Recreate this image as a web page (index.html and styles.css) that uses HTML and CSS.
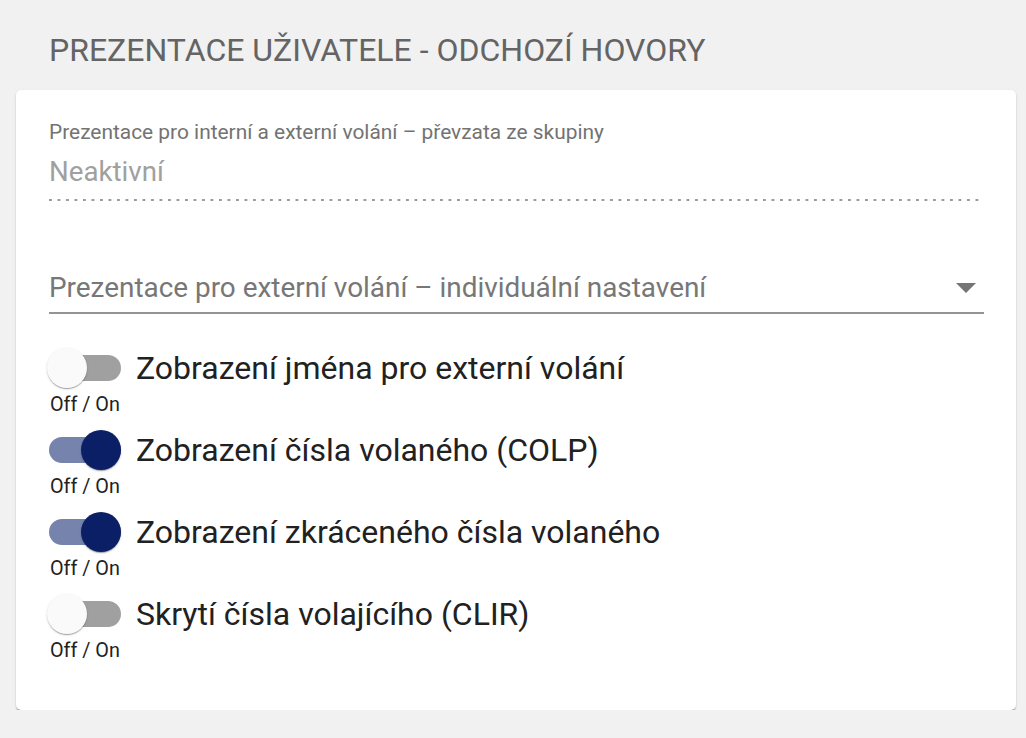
FILE: index.html
```html
<!DOCTYPE html>
<html lang="cs">
<head>
<meta charset="utf-8">
<title>Prezentace uživatele</title>
<link rel="stylesheet" href="styles.css">
</head>
<body>
<div class="page">
  <h1 class="title">PREZENTACE UŽIVATELE - ODCHOZÍ HOVORY</h1>
  <div class="card">
    <div class="field-disabled">
      <div class="field-label">Prezentace pro interní a externí volání – převzata ze skupiny</div>
      <div class="field-value">Neaktivní</div>
      <div class="dotted"></div>
    </div>
    <div class="select">
      <div class="select-row">
        <span class="select-placeholder">Prezentace pro externí volání – individuální nastavení</span>
        <span class="arrow"></span>
      </div>
      <div class="select-line"></div>
    </div>
    <div class="toggles">
      <div class="toggle-item">
        <div class="toggle-row">
          <span class="switch"><span class="track"></span><span class="thumb"></span></span>
          <span class="toggle-label">Zobrazení jména pro externí volání</span>
        </div>
        <div class="offon">Off / On</div>
      </div>
      <div class="toggle-item">
        <div class="toggle-row">
          <span class="switch on"><span class="track"></span><span class="thumb"></span></span>
          <span class="toggle-label">Zobrazení čísla volaného (COLP)</span>
        </div>
        <div class="offon">Off / On</div>
      </div>
      <div class="toggle-item">
        <div class="toggle-row">
          <span class="switch on"><span class="track"></span><span class="thumb"></span></span>
          <span class="toggle-label">Zobrazení zkráceného čísla volaného</span>
        </div>
        <div class="offon">Off / On</div>
      </div>
      <div class="toggle-item">
        <div class="toggle-row">
          <span class="switch"><span class="track"></span><span class="thumb"></span></span>
          <span class="toggle-label">Skrytí čísla volajícího (CLIR)</span>
        </div>
        <div class="offon">Off / On</div>
      </div>
    </div>
  </div>
</div>
</body>
</html>
```
FILE: styles.css
```css
html, body {
  margin: 0;
  padding: 0;
  background: #f1f1f1;
  font-family: Roboto, "Liberation Sans", sans-serif;
}
.page {
  padding: 30px 10px 0 16px;
}
.title {
  margin: 0 0 20px 33px;
  font-size: 32px;
  line-height: 40px;
  font-weight: 400;
  color: #646464;
}
.card {
  background: #fff;
  border-radius: 5px;
  box-shadow: 0 2px 2px -1px rgba(0,0,0,.3), 0 1px 1px rgba(0,0,0,.12), 0 1px 3px rgba(0,0,0,.1);
  padding: 30px 32px 47px 33px;
}
.field-label {
  font-size: 20.9px;
  line-height: 24px;
  color: #737373;
}
.field-value {
  margin-top: 11px;
  font-size: 27.7px;
  line-height: 34px;
  color: #a0a0a0;
}
.dotted {
  margin-top: 10px;
  margin-right: 5px;
  height: 2px;
  background-image: linear-gradient(to right, #9a9a9a 0, #9a9a9a 3px, transparent 3px);
  background-size: 8.5px 2px;
  background-repeat: repeat-x;
}
.select {
  margin-top: 69px;
}
.select-row {
  display: flex;
  align-items: center;
  justify-content: space-between;
  height: 36px;
}
.select-placeholder {
  font-size: 27.9px;
  line-height: 36px;
  color: #777;
}
.arrow {
  width: 0;
  height: 0;
  border-left: 10px solid transparent;
  border-right: 10px solid transparent;
  border-top: 10px solid #757575;
  margin-right: 8px;
}
.select-line {
  margin-top: 6px;
  height: 2px;
  background: #949494;
}
.toggles {
  margin-top: 34px;
  display: flex;
  flex-direction: column;
  gap: 13px;
}
.toggle-item {
  display: flex;
  flex-direction: column;
  gap: 5px;
}
.toggle-row {
  display: flex;
  align-items: center;
  gap: 15px;
  height: 40px;
}
.switch {
  position: relative;
  width: 72px;
  height: 40px;
  flex: none;
}
.track {
  position: absolute;
  left: 0;
  top: 7px;
  width: 72px;
  height: 26px;
  border-radius: 13px;
  background: #a0a0a0;
}
.thumb {
  position: absolute;
  top: 0;
  left: -2px;
  width: 40px;
  height: 40px;
  border-radius: 50%;
  background: #fafafa;
  box-shadow: 0 2px 1px -1px rgba(0,0,0,.2), 0 1px 1px rgba(0,0,0,.14), 0 1px 3px rgba(0,0,0,.12);
}
.switch.on .track {
  background: #7683ad;
}
.switch.on .thumb {
  left: auto;
  right: 0;
  background: #0b1f66;
}
.toggle-label {
  font-size: 32px;
  line-height: 40px;
  color: #212121;
}
.offon {
  padding-left: 1px;
  font-size: 19.8px;
  line-height: 24px;
  color: #222;
}
```
